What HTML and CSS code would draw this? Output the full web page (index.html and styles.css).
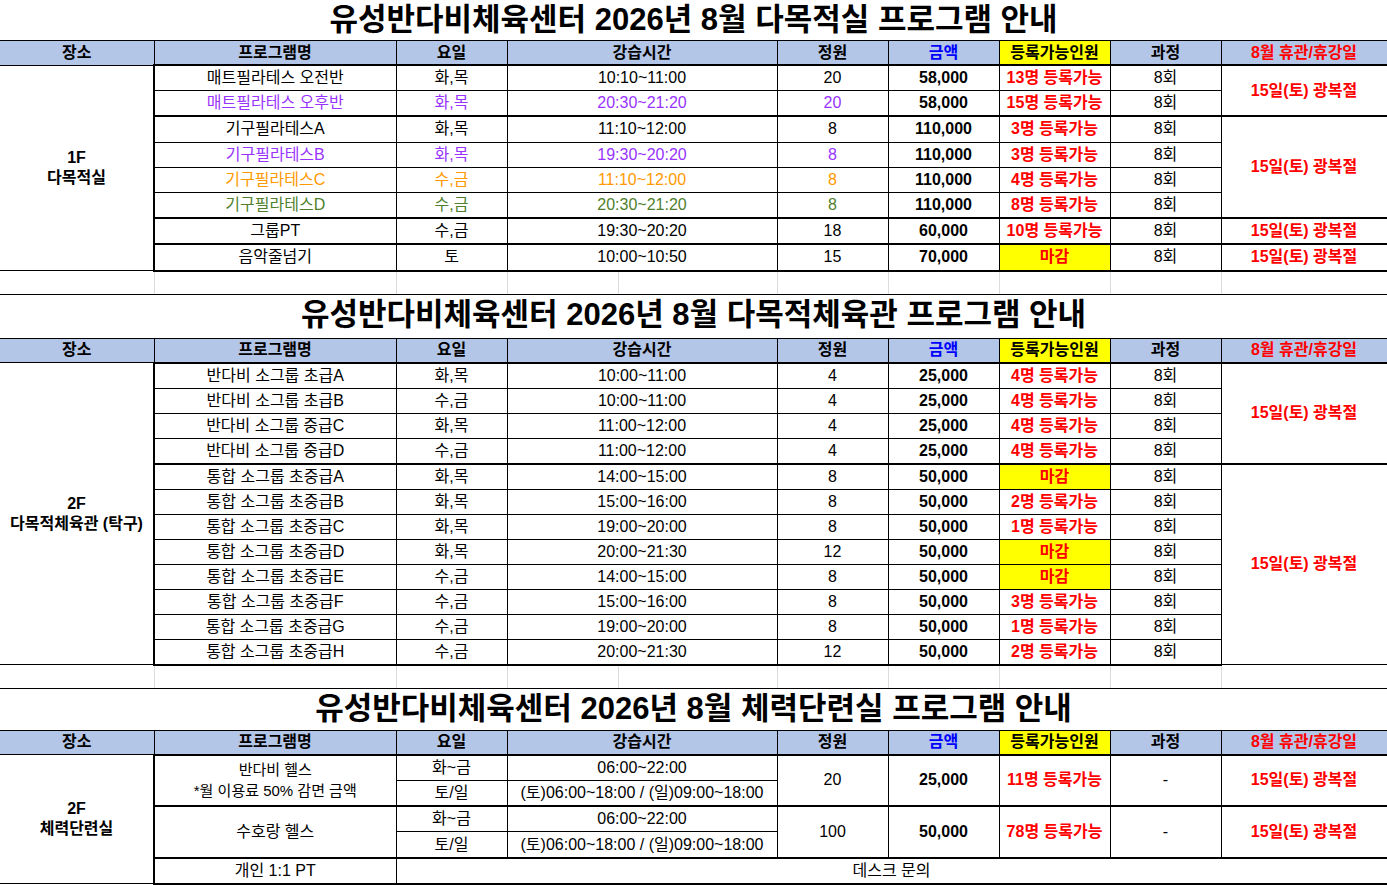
FILE: index.html
```html
<!DOCTYPE html>
<html lang="ko">
<head>
<meta charset="utf-8">
<title>유성반다비체육센터 2026년 8월 프로그램 안내</title>
<link rel="stylesheet" href="styles.css">
</head>
<body>
<table class="sheet">
  <colgroup>
    <col class="c-place"><col class="c-name"><col class="c-day"><col class="c-ta"><col class="c-tb">
    <col class="c-cap"><col class="c-fee"><col class="c-reg"><col class="c-cnt"><col class="c-off">
  </colgroup>
  <tbody class="s1">
    <tr class="title t1"><td colspan="10">유성반다비체육센터 2026년 8월 다목적실 프로그램 안내</td></tr>
    <tr class="head">
      <th class="first">장소</th><th>프로그램명</th><th>요일</th><th colspan="2">강습시간</th><th>정원</th>
      <th class="blue">금액</th><th class="yel">등록가능인원</th><th>과정</th><th class="red">8월 휴관/휴강일</th>
    </tr>
    <tr class="row gtop">
      <td class="place" rowspan="8">1F<br>다목적실</td>
      <td>매트필라테스 오전반</td><td>화,목</td><td colspan="2">10:10~11:00</td><td>20</td>
      <td class="fee">58,000</td><td class="reg">13명 등록가능</td><td>8회</td>
      <td class="off" rowspan="2">15일(토) 광복절</td>
    </tr>
    <tr class="row purple">
      <td>매트필라테스 오후반</td><td>화,목</td><td colspan="2">20:30~21:20</td><td>20</td>
      <td class="fee">58,000</td><td class="reg">15명 등록가능</td><td class="k">8회</td>
    </tr>
    <tr class="row gtop">
      <td>기구필라테스A</td><td>화,목</td><td colspan="2">11:10~12:00</td><td>8</td>
      <td class="fee">110,000</td><td class="reg">3명 등록가능</td><td>8회</td>
      <td class="off" rowspan="4">15일(토) 광복절</td>
    </tr>
    <tr class="row purple">
      <td>기구필라테스B</td><td>화,목</td><td colspan="2">19:30~20:20</td><td>8</td>
      <td class="fee">110,000</td><td class="reg">3명 등록가능</td><td class="k">8회</td>
    </tr>
    <tr class="row orange">
      <td>기구필라테스C</td><td>수,금</td><td colspan="2">11:10~12:00</td><td>8</td>
      <td class="fee">110,000</td><td class="reg">4명 등록가능</td><td class="k">8회</td>
    </tr>
    <tr class="row green">
      <td>기구필라테스D</td><td>수,금</td><td colspan="2">20:30~21:20</td><td>8</td>
      <td class="fee">110,000</td><td class="reg">8명 등록가능</td><td class="k">8회</td>
    </tr>
    <tr class="row gtop">
      <td>그룹PT</td><td>수,금</td><td colspan="2">19:30~20:20</td><td>18</td>
      <td class="fee">60,000</td><td class="reg">10명 등록가능</td><td>8회</td>
      <td class="off">15일(토) 광복절</td>
    </tr>
    <tr class="row gtop gbot">
      <td>음악줄넘기</td><td>토</td><td colspan="2">10:00~10:50</td><td>15</td>
      <td class="fee">70,000</td><td class="reg closed">마감</td><td>8회</td>
      <td class="off">15일(토) 광복절</td>
    </tr>
    <tr class="gap g24"><td class="first"></td><td></td><td></td><td></td><td></td><td></td><td></td><td></td><td></td><td></td></tr>
  </tbody>
  <tbody class="s2">
    <tr class="title t2"><td colspan="10">유성반다비체육센터 2026년 8월 다목적체육관 프로그램 안내</td></tr>
    <tr class="head">
      <th class="first">장소</th><th>프로그램명</th><th>요일</th><th colspan="2">강습시간</th><th>정원</th>
      <th class="blue">금액</th><th class="yel">등록가능인원</th><th>과정</th><th class="red">8월 휴관/휴강일</th>
    </tr>
    <tr class="row gtop">
      <td class="place" rowspan="12">2F<br>다목적체육관 (탁구)</td>
      <td>반다비 소그룹 초급A</td><td>화,목</td><td colspan="2">10:00~11:00</td><td>4</td>
      <td class="fee">25,000</td><td class="reg">4명 등록가능</td><td>8회</td>
      <td class="off" rowspan="4">15일(토) 광복절</td>
    </tr>
    <tr class="row">
      <td>반다비 소그룹 초급B</td><td>수,금</td><td colspan="2">10:00~11:00</td><td>4</td>
      <td class="fee">25,000</td><td class="reg">4명 등록가능</td><td>8회</td>
    </tr>
    <tr class="row">
      <td>반다비 소그룹 중급C</td><td>화,목</td><td colspan="2">11:00~12:00</td><td>4</td>
      <td class="fee">25,000</td><td class="reg">4명 등록가능</td><td>8회</td>
    </tr>
    <tr class="row">
      <td>반다비 소그룹 중급D</td><td>수,금</td><td colspan="2">11:00~12:00</td><td>4</td>
      <td class="fee">25,000</td><td class="reg">4명 등록가능</td><td>8회</td>
    </tr>
    <tr class="row gtop">
      <td>통합 소그룹 초중급A</td><td>화,목</td><td colspan="2">14:00~15:00</td><td>8</td>
      <td class="fee">50,000</td><td class="reg closed">마감</td><td>8회</td>
      <td class="off" rowspan="8">15일(토) 광복절</td>
    </tr>
    <tr class="row">
      <td>통합 소그룹 초중급B</td><td>화,목</td><td colspan="2">15:00~16:00</td><td>8</td>
      <td class="fee">50,000</td><td class="reg">2명 등록가능</td><td>8회</td>
    </tr>
    <tr class="row">
      <td>통합 소그룹 초중급C</td><td>화,목</td><td colspan="2">19:00~20:00</td><td>8</td>
      <td class="fee">50,000</td><td class="reg">1명 등록가능</td><td>8회</td>
    </tr>
    <tr class="row">
      <td>통합 소그룹 초중급D</td><td>화,목</td><td colspan="2">20:00~21:30</td><td>12</td>
      <td class="fee">50,000</td><td class="reg closed">마감</td><td>8회</td>
    </tr>
    <tr class="row">
      <td>통합 소그룹 초중급E</td><td>수,금</td><td colspan="2">14:00~15:00</td><td>8</td>
      <td class="fee">50,000</td><td class="reg closed">마감</td><td>8회</td>
    </tr>
    <tr class="row">
      <td>통합 소그룹 초중급F</td><td>수,금</td><td colspan="2">15:00~16:00</td><td>8</td>
      <td class="fee">50,000</td><td class="reg">3명 등록가능</td><td>8회</td>
    </tr>
    <tr class="row">
      <td>통합 소그룹 초중급G</td><td>수,금</td><td colspan="2">19:00~20:00</td><td>8</td>
      <td class="fee">50,000</td><td class="reg">1명 등록가능</td><td>8회</td>
    </tr>
    <tr class="row gbot">
      <td>통합 소그룹 초중급H</td><td>수,금</td><td colspan="2">20:00~21:30</td><td>12</td>
      <td class="fee">50,000</td><td class="reg">2명 등록가능</td><td>8회</td>
    </tr>
    <tr class="gap g25"><td class="first"></td><td></td><td></td><td></td><td></td><td></td><td></td><td></td><td></td><td></td></tr>
  </tbody>
  <tbody class="s3">
    <tr class="title t3"><td colspan="10">유성반다비체육센터 2026년 8월 체력단련실 프로그램 안내</td></tr>
    <tr class="head">
      <th class="first">장소</th><th>프로그램명</th><th>요일</th><th colspan="2">강습시간</th><th>정원</th>
      <th class="blue">금액</th><th class="yel">등록가능인원</th><th>과정</th><th class="red">8월 휴관/휴강일</th>
    </tr>
    <tr class="row gtop">
      <td class="place" rowspan="5">2F<br>체력단련실</td>
      <td class="two" rowspan="2">반다비 헬스<br>*월 이용료 50% 감면 금액</td>
      <td>화~금</td><td colspan="2">06:00~22:00</td>
      <td rowspan="2">20</td><td class="fee" rowspan="2">25,000</td>
      <td class="reg" rowspan="2">11명 등록가능</td><td rowspan="2">-</td>
      <td class="off" rowspan="2">15일(토) 광복절</td>
    </tr>
    <tr class="row">
      <td>토/일</td><td colspan="2">(토)06:00~18:00 / (일)09:00~18:00</td>
    </tr>
    <tr class="row gtop">
      <td rowspan="2">수호랑 헬스</td>
      <td>화~금</td><td colspan="2">06:00~22:00</td>
      <td rowspan="2">100</td><td class="fee" rowspan="2">50,000</td>
      <td class="reg" rowspan="2">78명 등록가능</td><td rowspan="2">-</td>
      <td class="off" rowspan="2">15일(토) 광복절</td>
    </tr>
    <tr class="row">
      <td>토/일</td><td colspan="2">(토)06:00~18:00 / (일)09:00~18:00</td>
    </tr>
    <tr class="row gtop gbot">
      <td>개인 1:1 PT</td><td colspan="8">데스크 문의</td>
    </tr>
  </tbody>
</table>
</body>
</html>
```

FILE: styles.css
```css
html, body {
  margin: 0;
  padding: 0;
  background: #ffffff;
}

body {
  font-family: "Liberation Sans", "Noto Sans CJK KR", sans-serif;
  color: #000000;
}

.sheet {
  border-collapse: collapse;
  table-layout: fixed;
  width: 1387px;
  font-size: 16px;
}

.c-place { width: 154px; }
.c-name { width: 242px; }
.c-day { width: 111px; }
.c-ta { width: 111px; }
.c-tb { width: 159px; }
.c-cap { width: 111px; }
.c-fee { width: 111px; }
.c-reg { width: 111px; }
.c-cnt { width: 111px; }
.c-off { width: 166px; }

.sheet td,
.sheet th {
  border: 1px solid #000000;
  padding: 0;
  text-align: center;
  vertical-align: middle;
  line-height: 18px;
  white-space: nowrap;
  overflow: hidden;
}

/* title rows */
.title td {
  border-left: none;
  border-right: none;
  font-size: 31px;
  font-weight: bold;
  line-height: 34px;
}
.t1 td { height: 39px; border-top: none; padding-bottom: 1px; }
.t2 td { height: 41px; padding-bottom: 2px; }
.t3 td { height: 40px; padding-bottom: 1px; }

/* header rows */
.head th {
  height: 23px;
  background: #b4c6e7;
  font-weight: bold;
  font-size: 16px;
}
.head th.first { border-left: none; }
.head th.blue { color: #0000ff; }
.head th.yel { background: #ffff00; }
.head th.red { color: #ff0000; }

/* data rows */
.s1 .row td { height: 24.2px; }
.s2 .row td { height: 24px; }
.s3 .row td { height: 24.3px; }
.row.gtop td { border-top: 2px solid #000000; }
.row.gbot td { border-bottom: 2px solid #000000; }

.sheet td.place {
  border-left: none;
  border-top: 1px solid #000000;
  border-bottom: 1px solid #000000;
  border-right: 2px solid #000000;
  font-weight: bold;
  font-size: 16px;
  line-height: 20px;
}

.sheet td.two { line-height: 21px; font-size: 15px; }

.fee { font-weight: bold; }
.reg { font-weight: bold; color: #ff0000; }
.reg.closed { background: #ffff00; }
.off { font-weight: bold; color: #ff0000; }

.purple td { color: #9933ff; }
.orange td { color: #ff9900; }
.green td { color: #4f7f2c; }
.purple td.fee, .orange td.fee, .green td.fee, .row td.k { color: #000000; }
.purple td.reg, .orange td.reg, .green td.reg { color: #ff0000; }

/* empty spacer rows with spreadsheet gridlines */
.gap td {
  border-top: none;
  border-bottom: 1px solid #000000;
  border-left: 1px solid #dcdcdc;
  border-right: 1px solid #dcdcdc;
}
.gap td.first { border-left: none; }
.g24 td { height: 22px; }
.g25 td { height: 22px; }
```
